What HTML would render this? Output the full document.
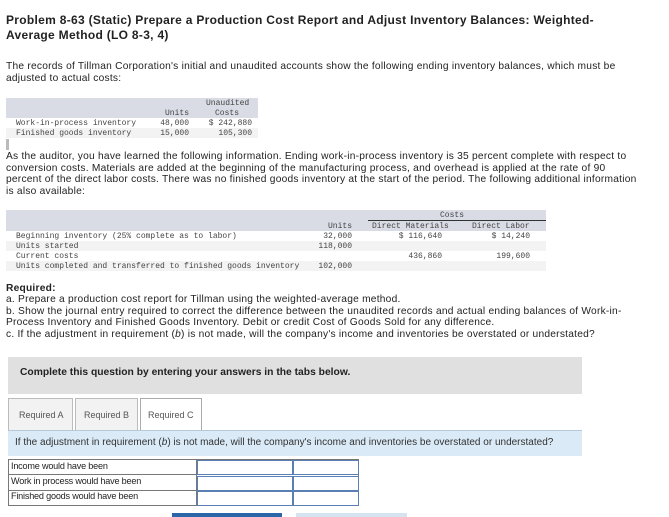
<!DOCTYPE html>
<html><head><meta charset="utf-8"><style>
body{margin:0;width:669px;height:515px;background:#fff;position:relative;overflow:hidden;font-family:"Liberation Sans",sans-serif;color:#222}
.a{position:absolute;white-space:nowrap}
.t{font-weight:bold;font-size:12px;letter-spacing:0.3px}
.p{font-size:10.2px;letter-spacing:0.24px;line-height:11.5px}
.m{font-family:"Liberation Mono",monospace;font-size:8px;color:#444}
.bg{position:absolute;background:#d9dce5}
.row{position:absolute;background:#f3f3f3}
.r{text-align:right}
</style></head><body>
<div class="a t" style="left:6px;top:13px">Problem 8-63 (Static) Prepare a Production Cost Report and Adjust Inventory Balances: Weighted-</div>
<div class="a t" style="left:6px;top:28px">Average Method (LO 8-3, 4)</div>
<div class="a p" style="left:6px;top:61px">The records of Tillman Corporation's initial and unaudited accounts show the following ending inventory balances, which must be<br>adjusted to actual costs:</div>

<div class="bg" style="left:6px;top:98px;width:252px;height:20px"></div>
<div class="row" style="left:6px;top:128px;width:252px;height:10px"></div>
<div class="a m r" style="left:150px;top:109px;width:39px">Units</div>
<div class="a m" style="left:206px;top:99px">Unaudited</div>
<div class="a m" style="left:215px;top:109px">Costs</div>
<div class="a m" style="left:16px;top:119px">Work-in-process inventory</div>
<div class="a m" style="left:16px;top:129px">Finished goods inventory</div>
<div class="a m r" style="left:150px;top:119px;width:39px">48,000</div>
<div class="a m r" style="left:150px;top:129px;width:39px">15,000</div>
<div class="a m r" style="left:200px;top:119px;width:52px">$ 242,880</div>
<div class="a m r" style="left:200px;top:129px;width:52px">105,300</div>
<div style="position:absolute;left:6px;top:139px;width:3px;height:11px;background:#bbb"></div>

<div class="a p" style="left:6px;top:151px">As the auditor, you have learned the following information. Ending work-in-process inventory is 35 percent complete with respect to<br>conversion costs. Materials are added at the beginning of the manufacturing process, and overhead is applied at the rate of 90<br>percent of the direct labor costs. There was no finished goods inventory at the start of the period. The following additional information<br>is also available:</div>

<div class="bg" style="left:6px;top:210px;width:540px;height:21px"></div>
<div style="position:absolute;left:368px;top:220px;width:178px;height:1px;background:#333"></div>
<div class="row" style="left:6px;top:241px;width:540px;height:10px"></div>
<div class="row" style="left:6px;top:261px;width:540px;height:10px"></div>
<div class="a m" style="left:440px;top:211px">Costs</div>
<div class="a m r" style="left:300px;top:222px;width:52px">Units</div>
<div class="a m" style="left:372px;top:222px">Direct Materials</div>
<div class="a m" style="left:472px;top:222px">Direct Labor</div>
<div class="a m" style="left:16px;top:232px">Beginning inventory (25% complete as to labor)</div>
<div class="a m" style="left:16px;top:242px">Units started</div>
<div class="a m" style="left:16px;top:252px">Current costs</div>
<div class="a m" style="left:16px;top:262px">Units completed and transferred to finished goods inventory</div>
<div class="a m r" style="left:300px;top:232px;width:52px">32,000</div>
<div class="a m r" style="left:300px;top:242px;width:52px">118,000</div>
<div class="a m r" style="left:300px;top:262px;width:52px">102,000</div>
<div class="a m r" style="left:380px;top:232px;width:62px">$ 116,640</div>
<div class="a m r" style="left:380px;top:252px;width:62px">436,860</div>
<div class="a m r" style="left:470px;top:232px;width:60px">$ 14,240</div>
<div class="a m r" style="left:470px;top:252px;width:60px">199,600</div>

<div class="a p" style="left:6px;top:283px;font-weight:bold">Required:</div>
<div class="a p" style="left:6px;top:294px">a. Prepare a production cost report for Tillman using the weighted-average method.<br>b. Show the journal entry required to correct the difference between the unaudited records and actual ending balances of Work-in-<br>Process Inventory and Finished Goods Inventory. Debit or credit Cost of Goods Sold for any difference.<br>c. If the adjustment in requirement (<i>b</i>) is not made, will the company's income and inventories be overstated or understated?</div>

<div style="position:absolute;left:8px;top:357px;width:574px;height:37px;background:#e0e0e0"></div>
<div class="a" style="left:20px;top:367px;font-size:10.3px;font-weight:bold;color:#222">Complete this question by entering your answers in the tabs below.</div>

<div style="position:absolute;left:8px;top:398px;width:63px;height:31px;background:#f2f2f2;border:1px solid #bbb;border-bottom:none"></div>
<div style="position:absolute;left:75px;top:398px;width:61px;height:31px;background:#f2f2f2;border:1px solid #bbb;border-bottom:none"></div>
<div style="position:absolute;left:140px;top:398px;width:60px;height:32px;background:#fff;border:1px solid #aaa;border-bottom:none"></div>
<div class="a" style="left:19px;top:410px;font-size:9px;color:#555">Required A</div>
<div class="a" style="left:84px;top:410px;font-size:9px;color:#555">Required B</div>
<div class="a" style="left:148px;top:410px;font-size:9px;color:#555">Required C</div>
<div style="position:absolute;left:8px;top:430px;width:574px;height:25px;background:#daeaf7;border-top:1px solid #b8c8d8"></div>
<div class="a" style="left:15px;top:437px;font-size:10px;color:#333">If the adjustment in requirement (<i>b</i>) is not made, will the company's income and inventories be overstated or understated?</div>

<div style="position:absolute;left:8px;top:459px;width:351px;height:47px;border:1px solid #777;box-sizing:border-box"></div>
<div style="position:absolute;left:8px;top:474px;width:188px;height:1px;background:#777"></div>
<div style="position:absolute;left:8px;top:490px;width:188px;height:1px;background:#777"></div>
<div style="position:absolute;left:196px;top:459px;width:1px;height:47px;background:#777"></div>
<div style="position:absolute;left:197px;top:460px;width:94px;height:13px;border:1px solid #5a7fb5"></div>
<div style="position:absolute;left:293px;top:460px;width:64px;height:13px;border:1px solid #5a7fb5"></div>
<div style="position:absolute;left:197px;top:476px;width:94px;height:13px;border:1px solid #5a7fb5"></div>
<div style="position:absolute;left:293px;top:476px;width:64px;height:13px;border:1px solid #5a7fb5"></div>
<div style="position:absolute;left:197px;top:491px;width:94px;height:13px;border:1px solid #5a7fb5"></div>
<div style="position:absolute;left:293px;top:491px;width:64px;height:13px;border:1px solid #5a7fb5"></div>
<div class="a" style="left:11px;top:461px;font-size:9.1px;letter-spacing:-0.2px">Income would have been</div>
<div class="a" style="left:11px;top:476px;font-size:9.1px;letter-spacing:-0.2px">Work in process would have been</div>
<div class="a" style="left:11px;top:491px;font-size:9.1px;letter-spacing:-0.2px">Finished goods would have been</div>

<div style="position:absolute;left:172px;top:513px;width:110px;height:4px;background:#2a66a8"></div>
<div style="position:absolute;left:296px;top:513px;width:111px;height:4px;background:#d6e4f2"></div>
</body></html>
